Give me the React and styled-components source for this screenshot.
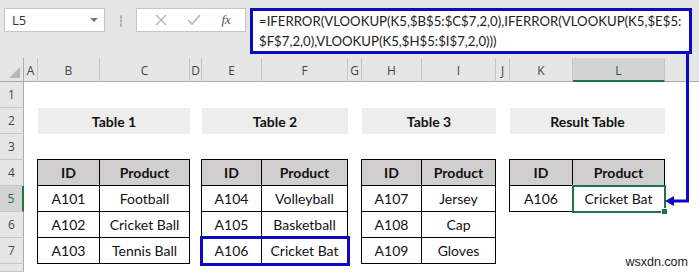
import React from 'react';
import styled, { createGlobalStyle } from 'styled-components';

const GlobalStyle = createGlobalStyle`
  html, body { margin: 0; padding: 0; background: #fff; }
  body { width: 699px; height: 272px; overflow: hidden; font-family: Lato, "Open Sans", sans-serif; }
`;

const Page = styled.div`
  position: relative;
  width: 699px;
  height: 272px;
  display: flex;
  flex-direction: column;
  background: #fff;
`;

const Bar = styled.div`
  display: flex;
  align-items: flex-start;
  height: 58px;
  padding: 8px 0 0 4px;
  box-sizing: border-box;
  background: #e6e6e6;
`;

const NameBox = styled.div`
  width: 101px;
  height: 24px;
  box-sizing: border-box;
  border: 1px solid #c6c6c6;
  background: #fff;
  display: flex;
  align-items: center;
  justify-content: space-between;
  padding: 0 6px 0 7px;
  font-family: "Open Sans", sans-serif;
  font-size: 13px;
  color: #333;
`;

const Caret = styled.span`
  width: 0;
  height: 0;
  border-left: 4px solid transparent;
  border-right: 4px solid transparent;
  border-top: 4px solid #777;
`;

const Dots = styled.div`
  width: 2px;
  height: 12px;
  margin: 7px 14px 0 15px;
  background-image: radial-gradient(#aaa 0.8px, transparent 1px);
  background-size: 2px 4px;
`;

const Buttons = styled.div`
  width: 110px;
  height: 24px;
  box-sizing: border-box;
  border: 1px solid #c6c6c6;
  background: #fff;
  display: flex;
  align-items: center;
  justify-content: space-around;
  padding: 0 4px 0 8px;
`;

const Fx = styled.span`
  font-family: "Liberation Serif", serif;
  font-style: italic;
  font-size: 13px;
  color: #555;
`;

const Formula = styled.div`
  width: 442px;
  height: 46px;
  margin-left: 4px;
  box-sizing: border-box;
  border: 3px solid #0a0ac4;
  background: #fff;
  padding: 0 0 0 6px;
  font-family: Lato, sans-serif;
  font-size: 13.2px;
  line-height: 20px;
  color: #222;
  white-space: nowrap;
  overflow: hidden;
`;

const Sheet = styled.div`
  flex: 1;
  display: grid;
  grid-template-columns: 24px 14px 62px 90px 12px 60px 86px 14px 60px 74px 14px 63px 92px 1fr;
  grid-template-rows: 24px repeat(7, 26px) 1fr;
`;

const Corner = styled.div`
  grid-column: 1 / 2;
  grid-row: 1;
  background: #e6e6e6;
  border-bottom: 1px solid #ababab;
  border-right: 1px solid #ababab;
  position: relative;
  &::after {
    content: '';
    position: absolute;
    right: 3px;
    bottom: 3px;
    border-left: 11px solid transparent;
    border-bottom: 11px solid #b7b7b7;
  }
`;

const ColHead = styled.div`
  grid-row: 1;
  background: ${p => (p.$active ? '#d3d3d3' : '#e6e6e6')};
  border-right: ${p => (p.$last ? 'none' : '1px solid #c6c6c6')};
  border-bottom: ${p => (p.$active ? '2px solid #217346' : '1px solid #ababab')};
  display: flex;
  align-items: center;
  justify-content: center;
  font-family: "Open Sans", sans-serif;
  font-size: 12px;
  color: ${p => (p.$active ? '#21593a' : '#444')};
  padding-top: 2px;
  box-sizing: border-box;
`;

const RowHead = styled.div`
  grid-column: 1;
  background: ${p => (p.$active ? '#d3d3d3' : '#e6e6e6')};
  border-bottom: 1px solid #c6c6c6;
  border-right: ${p => (p.$active ? '2px solid #217346' : '1px solid #ababab')};
  display: flex;
  align-items: center;
  justify-content: center;
  font-family: "Open Sans", sans-serif;
  font-size: 12px;
  color: ${p => (p.$active ? '#217346' : '#444')};
  box-sizing: border-box;
`;

const Title = styled.div`
  background: #ededed;
  display: flex;
  align-items: center;
  justify-content: center;
  font-weight: 700;
  font-size: 14px;
  color: #111;
`;

const DataTable = styled.div`
  display: grid;
  grid-template-columns: ${p => p.$cols};
  grid-auto-rows: 26px;
  border-top: 1px solid #000;
  border-left: 1px solid #000;
  margin-top: -1px;
  margin-left: -1px;
`;

const Cell = styled.div`
  border-right: 1px solid #000;
  border-bottom: 1px solid #000;
  background: ${p => (p.$head ? '#d0cece' : '#fff')};
  display: flex;
  align-items: center;
  justify-content: center;
  font-size: 14px;
  font-weight: ${p => (p.$head ? 700 : 400)};
  color: #111;
`;

const Highlight = styled.div`
  border: 3px solid #0a0ac4;
  margin: -2px;
  z-index: 2;
  pointer-events: none;
`;

const Selected = styled.div`
  border: 2px solid #217346;
  margin: -1px;
  z-index: 2;
  position: relative;
  &::after {
    content: '';
    position: absolute;
    right: -4px;
    bottom: -4px;
    width: 5px;
    height: 5px;
    background: #217346;
    border: 1px solid #fff;
  }
`;

const Arrow = styled.svg`
  position: absolute;
  left: 0;
  top: 0;
  pointer-events: none;
  z-index: 3;
`;

const Mark = styled.div`
  position: absolute;
  right: 11px;
  bottom: 3px;
  font-family: "Liberation Sans", Arial, sans-serif;
  font-size: 12.5px;
  color: #222;
`;

const letters = ['A', 'B', 'C', 'D', 'E', 'F', 'G', 'H', 'I', 'J', 'K', 'L', ''];

const tables = [
  { title: 'Table 1', col: 3, cols: '62px 90px', rows: [['A101', 'Football'], ['A102', 'Cricket Ball'], ['A103', 'Tennis Ball']] },
  { title: 'Table 2', col: 6, cols: '60px 86px', rows: [['A104', 'Volleyball'], ['A105', 'Basketball'], ['A106', 'Cricket Bat']] },
  { title: 'Table 3', col: 9, cols: '60px 74px', rows: [['A107', 'Jersey'], ['A108', 'Cap'], ['A109', 'Gloves']] },
  { title: 'Result Table', col: 12, cols: '63px 92px', rows: [['A106', 'Cricket Bat']] },
];

export default function App() {
  return (
    <Page>
      <GlobalStyle />
      <Bar>
        <NameBox>L5<Caret /></NameBox>
        <Dots />
        <Buttons>
          <svg width="12" height="12" viewBox="0 0 12 12"><path d="M1 1 L11 11 M11 1 L1 11" stroke="#b5b5b5" strokeWidth="1.4" /></svg>
          <svg width="14" height="12" viewBox="0 0 14 12"><path d="M1 6 L5 10 L13 1" stroke="#b5b5b5" strokeWidth="1.6" fill="none" /></svg>
          <Fx>fx</Fx>
        </Buttons>
        <Formula>
          =IFERROR(VLOOKUP(K5,$B$5:$C$7,2,0),IFERROR(VLOOKUP(K5,$E$5:<br />
          $F$7,2,0),VLOOKUP(K5,$H$5:$I$7,2,0)))
        </Formula>
      </Bar>
      <Sheet>
        <Corner />
        {letters.map((l, i) => (
          <ColHead key={i} style={{ gridColumn: i + 2 }} $active={l === 'L'} $last={l === ''}>{l}</ColHead>
        ))}
        {[1, 2, 3, 4, 5, 6, 7, ''].map((n, i) => (
          <RowHead key={i} style={{ gridRow: i + 2 }} $active={n === 5}>{n}</RowHead>
        ))}
        {tables.map(t => (
          <React.Fragment key={t.title}>
            <Title style={{ gridColumn: `${t.col} / span 2`, gridRow: 3 }}>{t.title}</Title>
            <DataTable $cols={t.cols} style={{ gridColumn: `${t.col} / span 2`, gridRow: `5 / span ${t.rows.length + 1}` }}>
              <Cell $head>ID</Cell>
              <Cell $head>Product</Cell>
              {t.rows.map(r => r.map((v, j) => <Cell key={r[0] + j}>{v}</Cell>))}
            </DataTable>
          </React.Fragment>
        ))}
        <Highlight style={{ gridColumn: '6 / span 2', gridRow: 8 }} />
        <Selected style={{ gridColumn: 13, gridRow: 6 }} />
      </Sheet>
      <Arrow width="699" height="272">
        <path d="M687.5 53 V201 H672" stroke="#0a0ac4" strokeWidth="3" fill="none" />
        <path d="M665 201 L674 196 L674 206 Z" fill="#0a0ac4" />
      </Arrow>
      <Mark>wsxdn.com</Mark>
    </Page>
  );
}
